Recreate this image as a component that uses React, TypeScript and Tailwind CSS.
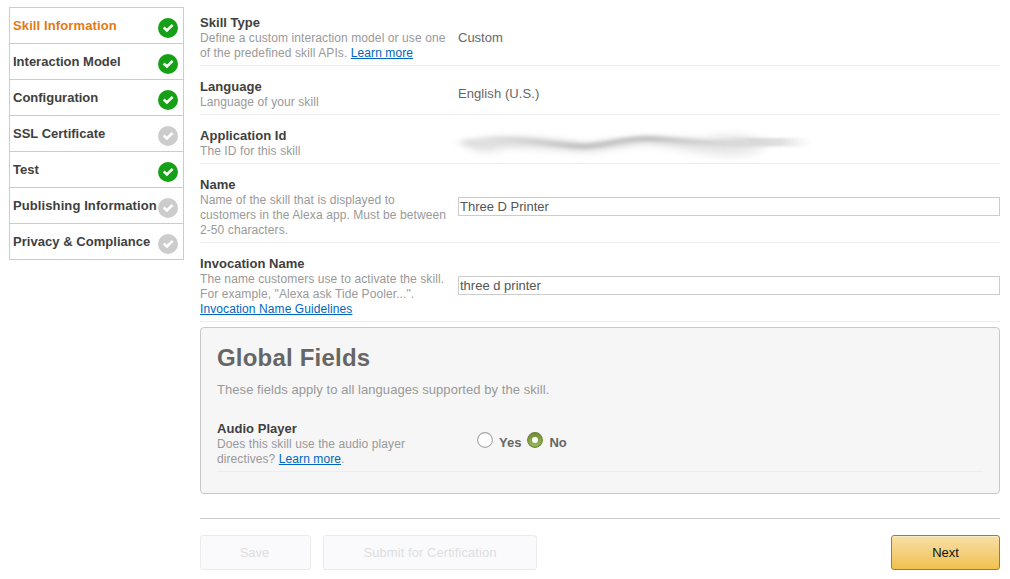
import type { ReactNode } from "react";

const steps = [
  { label: "Skill Information", done: true, tone: "tracking-[0.12px] text-[#e47911]" },
  { label: "Interaction Model", done: true, tone: "text-[#404040]" },
  { label: "Configuration", done: true, tone: "text-[#404040]" },
  { label: "SSL Certificate", done: false, tone: "text-[#404040]" },
  { label: "Test", done: true, tone: "text-[#404040]" },
  { label: "Publishing Information", done: false, tone: "tracking-[0.1px] text-[#404040]" },
  { label: "Privacy & Compliance", done: false, tone: "tracking-[0.04px] text-[#404040]" },
];

function StepIcon({ done }: { done: boolean }) {
  return (
    <svg className="mt-[5px] mr-[5px] h-5 w-5 shrink-0" viewBox="0 0 20 20">
      <circle cx="10" cy="10" r="10" fill={done ? "#16a016" : "#cccccc"} />
      <path d="M5.7 9.6 L8.9 12.5 L14.6 6.9" fill="none" stroke="#fff" strokeWidth="2.7" />
    </svg>
  );
}

function Link({ children }: { children: ReactNode }) {
  return (
    <a href="#" className="text-[#0066c0] underline">
      {children}
    </a>
  );
}

function Field({ title, help, children, first = false }: { title: string; help: ReactNode; children: ReactNode; first?: boolean }) {
  return (
    <div className={`flex items-center border-b border-[#ededed] pb-[4px] ${first ? "" : "pt-[13px]"}`}>
      <div className="w-[258px] shrink-0">
        <div className="pb-px text-[13px] leading-[15px] font-bold tracking-[0.04px] text-[#404040]">{title}</div>
        <div className="text-[12px] leading-[15px] tracking-[0.09px] whitespace-nowrap text-[#999]">{help}</div>
      </div>
      <div className="flex min-w-0 flex-1 items-center pb-[2px] text-[13px] leading-[15px] text-[#666]">{children}</div>
    </div>
  );
}

function TextInput({ value }: { value: string }) {
  return <input defaultValue={value} className="h-[19px] w-full border border-[#ccc] bg-white px-px text-[13px] text-[#555] outline-none" />;
}

function Smudge() {
  return (
    <svg className="-my-4 -ml-[18px] block h-[60px] w-[400px] overflow-visible" viewBox="0 -2 400 60">
      <defs>
        <filter id="wide" x="-20%" y="-100%" width="140%" height="300%">
          <feGaussianBlur stdDeviation="7 3.6" />
        </filter>
        <filter id="soft" x="-20%" y="-100%" width="140%" height="300%">
          <feGaussianBlur stdDeviation="5 2.2" />
        </filter>
        <filter id="fine" x="-20%" y="-100%" width="140%" height="300%">
          <feGaussianBlur stdDeviation="7 1.8" />
        </filter>
        <linearGradient id="tail" x1="0" x2="1">
          <stop offset="0" stopColor="#d8d8d8" stopOpacity="0" />
          <stop offset="0.35" stopColor="#d8d8d8" />
          <stop offset="0.65" stopColor="#e0e0e0" />
          <stop offset="1" stopColor="#ececec" stopOpacity="0" />
        </linearGradient>
        <linearGradient id="core" gradientUnits="userSpaceOnUse" x1="40" y1="0" x2="310" y2="0">
          <stop offset="0" stopColor="#d4d4d4" stopOpacity="0.3" />
          <stop offset="0.35" stopColor="#b8b8b8" />
          <stop offset="0.65" stopColor="#b8b8b8" />
          <stop offset="1" stopColor="#cfcfcf" stopOpacity="0.3" />
        </linearGradient>
      </defs>
      <path d="M60 49 H330" stroke="#fff" strokeWidth="5" opacity="0.8" filter="url(#fine)" />
      <path
        d="M26 27 C50 20 80 20 105 23 L148 28 L205 21 L265 23 C280 17 305 17 322 25 C330 36 310 42 290 42 C262 42 240 33 205 30 C180 32 162 38 140 38 C110 35 85 34 62 34 C50 42 35 40 26 27Z"
        fill="#ebebeb"
        filter="url(#wide)"
      />
      <path
        d="M21 25 C48 23 70 21 95 23 L148 28 L205 21 L265 25 L312 25 C312 34 290 34 265 33 L205 28 L145 36 L95 31 L60 31 C45 35 32 34 21 30Z"
        fill="#e0e0e0"
        filter="url(#soft)"
      />
      <path
        d="M50 24 C95 24 115 31 145 31.5 C168 30 182 23.5 208 23.5 C240 25 260 29 305 28"
        fill="none"
        stroke="url(#core)"
        strokeWidth="5"
        opacity="0.7"
        filter="url(#fine)"
      />
      <rect x="280" y="23" width="94" height="8.5" fill="url(#tail)" className="blur-[1px]" />
    </svg>
  );
}

function Radio({ label, checked = false }: { label: string; checked?: boolean }) {
  return (
    <label className="flex items-center gap-[6px]">
      <svg className="-mt-[5px] h-4 w-4" viewBox="0 0 16 16">
        <defs>
          <linearGradient id="olive" x1="0" y1="0" x2="0" y2="1">
            <stop offset="0" stopColor="#738c36" />
            <stop offset="1" stopColor="#9aba58" />
          </linearGradient>
        </defs>
        <circle cx="8" cy="8" r="7.4" fill={checked ? "url(#olive)" : "#fff"} stroke={checked ? "#6c823c" : "#a6a6a6"} strokeWidth="1.1" />
        {checked && <circle cx="8" cy="8" r="3" fill="#fff" />}
      </svg>
      <span className="text-[13px] leading-[15px] font-bold">{label}</span>
    </label>
  );
}

export default function App() {
  return (
    <div className="flex h-[579px] w-[1010px] items-start gap-4 overflow-hidden bg-white pl-[9px] font-['Liberation_Sans',Arial,sans-serif]">
      <nav className="mt-[7px] w-[175px] shrink-0 border border-b-0 border-[#ccc]">
        {steps.map((s) => (
          <div key={s.label} className="flex h-9 items-center justify-between border-b border-[#ccc] pl-[3px]">
            <span className={`text-[13px] leading-[15px] font-bold whitespace-nowrap ${s.tone}`}>{s.label}</span>
            <StepIcon done={s.done} />
          </div>
        ))}
      </nav>

      <main className="w-[800px] pt-[15px]">
        <Field
          first
          title="Skill Type"
          help={
            <>
              Define a custom interaction model or use one
              <br />
              of the predefined skill APIs. <Link>Learn more</Link>
            </>
          }
        >
          Custom
        </Field>
        <Field title="Language" help="Language of your skill">
          <span className="tracking-[0.08px]">English (U.S.)</span>
        </Field>
        <Field title="Application Id" help="The ID for this skill">
          <Smudge />
        </Field>
        <Field
          title="Name"
          help={
            <>
              Name of the skill that is displayed to
              <br />
              customers in the Alexa app. Must be between
              <br />
              2-50 characters.
            </>
          }
        >
          <TextInput value="Three D Printer" />
        </Field>
        <Field
          title="Invocation Name"
          help={
            <>
              The name customers use to activate the skill.
              <br />
              For example, "Alexa ask Tide Pooler...".
              <br />
              <Link>Invocation Name Guidelines</Link>
            </>
          }
        >
          <TextInput value="three d printer" />
        </Field>

        <section className="mt-[5px] h-[167px] rounded-[4px] border border-[#c8c8c8] bg-[#f6f6f6] px-4 pt-[15px]">
          <h2 className="text-[24px] leading-[30px] font-bold tracking-[0.2px] text-[#666]">Global Fields</h2>
          <p className="mt-[9px] mb-[11px] text-[13px] leading-[15px] tracking-[0.06px] text-[#999]">These fields apply to all languages supported by the skill.</p>
          <Field
            title="Audio Player"
            help={
              <>
                Does this skill use the audio player
                <br />
                directives? <Link>Learn more</Link>.
              </>
            }
          >
            <div className="flex gap-[6px] pb-px pl-[2px]">
              <Radio label="Yes" />
              <Radio label="No" checked />
            </div>
          </Field>
        </section>

        <div className="mt-6 flex gap-3 border-t border-[#c8c8c8] pt-4 text-[13px]">
          <button disabled className="h-[35px] w-[111px] rounded-[3px] border border-[#ebebed] bg-[#fafafc] pr-[2px] text-[#dedede]">
            Save
          </button>
          <button disabled className="h-[35px] w-[214px] rounded-[3px] border border-[#ebebed] bg-[#fafafc] tracking-[0.06px] text-[#dedede]">
            Submit for Certification
          </button>
          <button className="ml-auto h-[35px] w-[109px] rounded-[3px] border border-[#9c7e31] bg-gradient-to-b from-[#f7dfa5] to-[#f0c14b] text-[#111] shadow-[inset_0_1px_0_rgba(255,255,255,0.4)]">
            Next
          </button>
        </div>
      </main>
    </div>
  );
}
